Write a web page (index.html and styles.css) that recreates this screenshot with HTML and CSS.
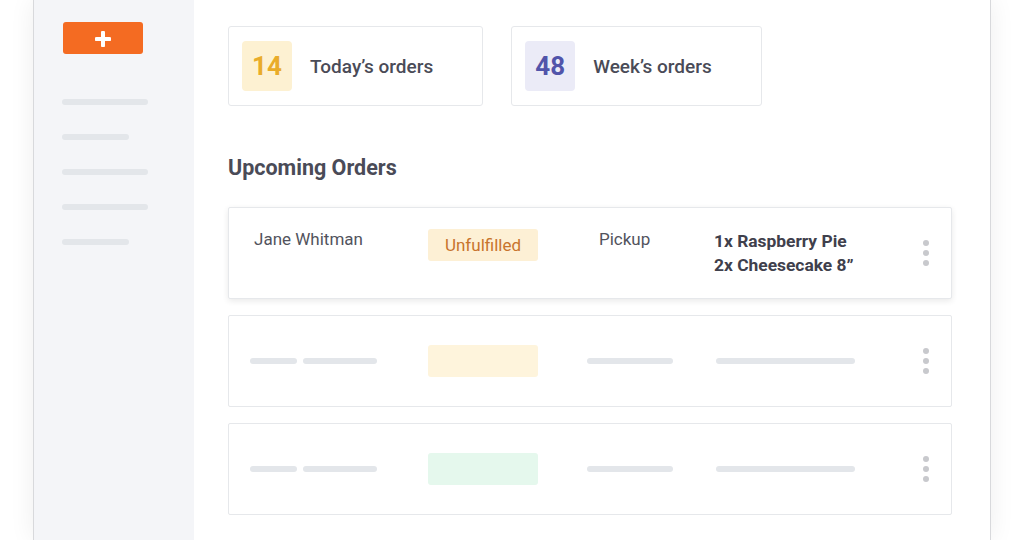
FILE: index.html
```html
<!DOCTYPE html>
<html lang="en">
<head>
<meta charset="utf-8">
<title>Orders</title>
<link rel="stylesheet" href="styles.css">
</head>
<body>
<div class="frame">
  <aside class="sidebar">
    <button class="add-btn" aria-label="Add">
      <svg width="16" height="16" viewBox="0 0 16 16"><path d="M8 1.5v13M1.5 8h13" stroke="#fff" stroke-width="4" stroke-linecap="round"/></svg>
    </button>
    <nav class="nav">
      <span class="nav-line long"></span>
      <span class="nav-line short"></span>
      <span class="nav-line long"></span>
      <span class="nav-line long"></span>
      <span class="nav-line short"></span>
    </nav>
  </aside>
  <main class="main">
    <div class="stats">
      <div class="stat-card">
        <div class="stat-num yellow">14</div>
        <div class="stat-label">Today’s orders</div>
      </div>
      <div class="stat-card">
        <div class="stat-num indigo">48</div>
        <div class="stat-label">Week’s orders</div>
      </div>
    </div>
    <h2 class="heading">Upcoming Orders</h2>
    <div class="orders">
      <div class="order order-active">
        <div class="cell name">Jane Whitman</div>
        <div class="cell"><span class="status">Unfulfilled</span></div>
        <div class="cell name">Pickup</div>
        <div class="cell items">1x Raspberry Pie<br>2x Cheesecake 8”</div>
        <div class="kebab"><i></i><i></i><i></i></div>
      </div>
      <div class="order order-ph">
        <div class="cell ph-name"><span class="ph-line w47"></span><span class="ph-line w74"></span></div>
        <div class="cell"><span class="ph-block peach"></span></div>
        <div class="cell ph-pick"><span class="ph-line w86"></span></div>
        <div class="cell ph-items"><span class="ph-line w139"></span></div>
        <div class="kebab"><i></i><i></i><i></i></div>
      </div>
      <div class="order order-ph">
        <div class="cell ph-name"><span class="ph-line w47"></span><span class="ph-line w74"></span></div>
        <div class="cell"><span class="ph-block mint"></span></div>
        <div class="cell ph-pick"><span class="ph-line w86"></span></div>
        <div class="cell ph-items"><span class="ph-line w139"></span></div>
        <div class="kebab"><i></i><i></i><i></i></div>
      </div>
    </div>
  </main>
</div>
</body>
</html>
```
FILE: styles.css
```css
* { box-sizing: border-box; }
html, body { margin: 0; padding: 0; background: #fff; }
body {
  font-family: Roboto, "Liberation Sans", sans-serif;
  color: #4a4b57;
  height: 540px;
  overflow: hidden;
}
.frame {
  margin-left: 33px;
  width: 958px;
  height: 540px;
  display: flex;
  border-left: 1px solid #d8d9dc;
  border-right: 1px solid #d8d9dc;
  box-shadow: 0 0 24px rgba(0, 0, 0, 0.07);
  background: #fff;
}
.sidebar {
  width: 160px;
  flex: none;
  background: #f4f5f8;
  padding: 22px 0 0 29px;
}
.add-btn {
  width: 80px;
  height: 32px;
  border: 0;
  border-radius: 3px;
  background: #f46b22;
  display: flex;
  align-items: center;
  justify-content: center;
  padding: 0;
  padding-top: 1px;
}
.add-btn svg { display: block; }
.nav {
  display: flex;
  flex-direction: column;
  gap: 29px;
  margin-top: 45px;
  margin-left: -1px;
}
.nav-line {
  display: block;
  height: 6px;
  border-radius: 3px;
  background: #e3e6ea;
}
.nav-line.long { width: 86px; }
.nav-line.short { width: 67px; }

.main {
  flex: 1;
  padding: 26px 38px 0 34px;
}
.stats {
  display: flex;
  gap: 28px;
}
.stat-card {
  display: flex;
  align-items: center;
  gap: 18px;
  height: 80px;
  padding: 0 49px 0 13px;
  border: 1px solid #e6e8eb;
  border-radius: 3px;
}
.stat-num {
  width: 50px;
  height: 50px;
  border-radius: 4px;
  display: flex;
  align-items: center;
  justify-content: center;
  font-size: 26px;
  font-weight: 700;
}
.stat-num.yellow { background: #fdf1d2; color: #e9ac2a; }
.stat-num.indigo { background: #ebebf7; color: #5154aa; }
.stat-label {
  font-size: 19px;
  font-weight: 500;
  color: #4a4b57;
}
.heading {
  margin: 50px 0 27px;
  font-size: 21.5px;
  line-height: 24px;
  font-weight: 700;
  color: #4a4b57;
}
.orders {
  display: flex;
  flex-direction: column;
  gap: 16px;
}
.order {
  display: grid;
  grid-template-columns: 174px 171px 115px 1fr 6px;
  height: 92px;
  padding: 0 22px 0 25px;
  border: 1px solid #e6e8eb;
  border-radius: 2px;
  background: #fff;
}
.order-active {
  align-items: start;
  padding-top: 21px;
  box-shadow: 0 2px 6px rgba(0, 0, 0, 0.09);
}
.order-ph { align-items: center; }
.cell { font-size: 17px; line-height: 24px; }
.name { color: #52535d; margin-top: -2px; }
.status {
  display: flex;
  align-items: center;
  justify-content: center;
  width: 110px;
  height: 32px;
  border-radius: 3px;
  background: #fdf0d5;
  color: #c8742d;
}
.items {
  font-weight: 700;
  font-size: 17.4px;
  color: #3f404c;
}
.kebab {
  align-self: center;
  display: flex;
  flex-direction: column;
  gap: 4px;
}
.order-active .kebab { margin-top: -21px; }
.kebab i {
  display: block;
  width: 6px;
  height: 6px;
  border-radius: 50%;
  background: #c8c9cd;
}
.ph-name { display: flex; gap: 6px; margin-left: -4px; }
.ph-pick { margin-left: -12px; }
.ph-items { margin-left: 2px; }
.ph-line {
  display: block;
  height: 6px;
  border-radius: 3px;
  background: #e3e6ea;
}
.w47 { width: 47px; }
.w74 { width: 74px; }
.w86 { width: 86px; }
.w139 { width: 139px; }
.ph-block {
  display: block;
  width: 110px;
  height: 32px;
  border-radius: 3px;
}
.ph-block.peach { background: #fef4dc; }
.ph-block.mint { background: #e5f8ed; }
```
